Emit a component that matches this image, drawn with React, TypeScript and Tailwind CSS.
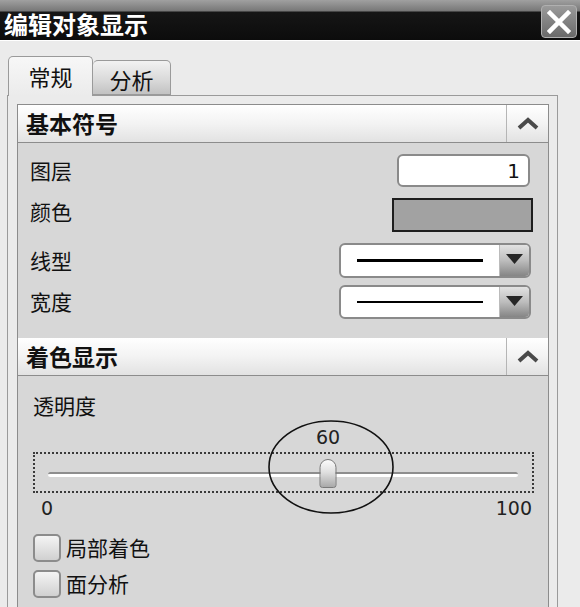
import React from 'react';

const cjk = '"Noto Sans CJK SC", "Noto Sans", sans-serif';
const num = '"DejaVu Sans", "Liberation Sans", sans-serif';

function Chevron() {
  return (
    <svg width="22" height="13" viewBox="0 0 22 13">
      <polyline points="2,11 11,3 20,11" fill="none" stroke="#4a4a4a" strokeWidth="4" />
    </svg>
  );
}

function SectionHeader({ title }: { title: string }) {
  return (
    <div className="flex h-[38px] items-stretch border-b border-[#8c8c8c] bg-[linear-gradient(to_bottom,#ffffff,#f3f3f3_50%,#e2e2e2)]">
      <div className="flex flex-1 items-center pl-[8px] text-[23px] font-bold text-[#111]">{title}</div>
      <div className="flex w-[42px] items-center justify-center border-l border-[#b5b5b5]">
        <Chevron />
      </div>
    </div>
  );
}

function LineSelect({ thick }: { thick: number }) {
  return (
    <div className="flex h-full w-[192px] overflow-hidden rounded-[6px] border-2 border-[#8a8a8a] bg-white">
      <div className="flex flex-1 items-center px-[16px]">
        <div className="w-full bg-black" style={{ height: thick }} />
      </div>
      <div className="flex w-[30px] justify-center border-l border-[#bbb] bg-[linear-gradient(to_bottom,#e2e2e2,#bdbdbd_50%,#858585)] pt-[9px]">
        <svg width="17" height="10" viewBox="0 0 17 10">
          <polygon points="0,0 17,0 8.5,10" fill="#262626" />
        </svg>
      </div>
    </div>
  );
}

function Check({ label }: { label: string }) {
  return (
    <div className="flex h-[28px] items-center gap-[5px]">
      <div className="h-[28px] w-[28px] rounded-[5px] border-2 border-[#8c8c8c] bg-[linear-gradient(to_bottom,#f4f4f4,#d0d0d0)]" />
      <span className="text-[21px] text-[#111]">{label}</span>
    </div>
  );
}

export default function App() {
  const value = 60;

  return (
    <div className="h-[607px] w-[580px] overflow-hidden bg-[#ebebeb]" style={{ fontFamily: cjk }}>
      {/* title bar */}
      <div className="flex h-[41px] items-start border-b border-white bg-[linear-gradient(to_bottom,#a0a0a0_0px,#777_11px,#161616_12px,#0c0c0c_40px)]">
        <div className="pl-[4px] pt-[10px] text-[24px] font-bold leading-[28px] text-white">编辑对象显示</div>
        <div className="ml-auto mr-[3px] mt-[5px] flex h-[33px] w-[36px] items-center justify-center rounded-[4px] border border-[#b0b0b0] bg-[linear-gradient(to_bottom,#9a9a9a,#6a6a6a)]">
          <svg width="24" height="24" viewBox="0 0 24 24">
            <path d="M3 3 L21 21 M21 3 L3 21" stroke="#fff" strokeWidth="4.5" strokeLinecap="square" />
          </svg>
        </div>
      </div>

      {/* tabs */}
      <div className="flex h-[54px] items-end pl-[8px]">
        <div className="relative z-10 -mb-px flex h-[40px] w-[85px] items-center justify-center rounded-t-[5px] border border-b-0 border-[#9a9a9a] bg-[linear-gradient(to_bottom,#f7f7f7,#ebebeb)] text-[22px] text-[#111]">
          常规
        </div>
        <div className="flex h-[35px] w-[78px] items-center justify-center rounded-t-[5px] border border-l-0 border-[#9a9a9a] bg-[linear-gradient(to_bottom,#f2f2f2,#d8d8d8_60%,#c2c2c2)] pt-[3px] text-[22px] text-[#111]">
          分析
        </div>
      </div>

      {/* tab frame */}
      <div className="ml-[7px] w-[551px] border border-b-0 border-[#9a9a9a] pl-[9px] pr-[8px] pt-[8px]">
        <div className="border border-b-0 border-[#8c8c8c]">
          <SectionHeader title="基本符号" />
          <div className="flex h-[195px] flex-col bg-[#d7d7d7] pl-[12px] pt-[11px] text-[21px] text-[#111]">
            <div className="flex h-[33px] items-center justify-between pr-[18px]">
              <span>图层</span>
              <div className="flex h-full w-[133px] items-center justify-end rounded-[6px] border-2 border-[#8a8a8a] bg-white pr-[8px] text-[20px]" style={{ fontFamily: num }}>
                1
              </div>
            </div>
            <div className="mt-[11px] flex h-[34px] items-center justify-between pr-[15px]">
              <span className="-mt-[6px]">颜色</span>
              <div className="h-full w-[141px] border-2 border-[#1e1e1e] bg-[#a2a2a2]" />
            </div>
            <div className="mt-[11px] flex h-[35px] items-center justify-between pr-[17px]">
              <span>线型</span>
              <LineSelect thick={3} />
            </div>
            <div className="mt-[7px] flex h-[34px] items-center justify-between pr-[17px]">
              <span>宽度</span>
              <LineSelect thick={2} />
            </div>
          </div>

          <SectionHeader title="着色显示" />
          <div className="relative flex h-[240px] flex-col bg-[#d7d7d7] pl-[15px] pr-[14px] pt-[15px] text-[21px] text-[#111]">
            <span className="leading-[28px]">透明度</span>

            {/* slider */}
            <div className="relative mt-[33px] h-[41px] border-2 border-dotted border-[#3a3a3a]">
              <div className="absolute left-[13px] right-[14px] top-[18px] h-[5px] rounded-full border-t-2 border-[#8e8e8e] bg-white" />
              <div
                className="absolute top-[5px] h-[29px] w-[17px] -translate-x-1/2 rounded-t-[9px] rounded-b-[3px] border border-[#7a7a7a] bg-[linear-gradient(to_bottom,#fbfbfb,#e0e0e0_45%,#a9a9a9)]"
                style={{ left: `calc(11px + (100% - 27px) * ${value / 100})` }}
              />
              <div
                className="absolute -top-[29px] -translate-x-1/2 text-[19px] leading-[24px] text-[#222]"
                style={{ left: `calc(11px + (100% - 27px) * ${value / 100})`, fontFamily: num }}
              >
                {value}
              </div>
            </div>

            <div className="flex h-[30px] items-center justify-between pl-[8px] pr-[2px] text-[19px] leading-[24px] text-[#222]" style={{ fontFamily: num }}>
              <span>0</span>
              <span>100</span>
            </div>

            <div className="mt-[11px] flex flex-col gap-[8px]">
              <Check label="局部着色" />
              <Check label="面分析" />
            </div>

            {/* hand-drawn mark round the slider value */}
            <svg className="pointer-events-none absolute left-[249px] top-[43px]" width="128" height="96" viewBox="0 0 128 96">
              <ellipse cx="64" cy="48" rx="62" ry="46" fill="none" stroke="#111" strokeWidth="1.6" />
            </svg>
          </div>
        </div>
      </div>
    </div>
  );
}
